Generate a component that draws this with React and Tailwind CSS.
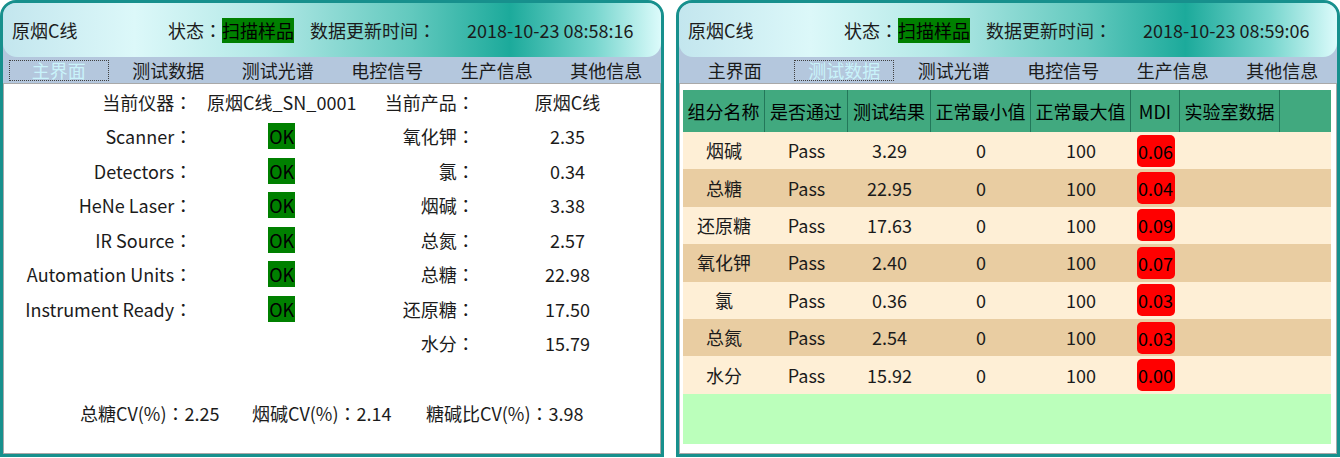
const FONT = { fontFamily: '"Noto Sans CJK SC", "Noto Sans", sans-serif' };

const TABS = ["主界面", "测试数据", "测试光谱", "电控信号", "生产信息", "其他信息"];

// centred full-width colon, as in the TC cut
function C() {
  return <span className="font-['Noto_Sans_CJK_TC',sans-serif]">：</span>;
}

function Header({ time }) {
  return (
    <div className="h-[54px] flex items-center rounded-b-[14px] bg-[linear-gradient(90deg,#c3e6ee_0%,#dcf8f9_20%,#b2e8e6_40%,#62c9be_62%,#1caa9b_77%,#78d6ce_90%,#dcfbfb_100%)] text-[18px] text-[#1b1b1b]">
      <span className="ml-[9px] w-[156px]">原烟C线</span>
      <span className="w-[54px]">状态<C /></span>
      <span className="w-[72px] h-[25px] leading-[25px] bg-[#008000] text-black">扫描样品</span>
      <span className="ml-[16px] w-[157px]">数据更新时间<C /></span>
      <span>{time}</span>
    </div>
  );
}

function Tabs({ active }) {
  return (
    <div className="h-[26px] flex pl-[1px] text-[18px] text-[#1b1b1b]">
      {TABS.map((t, i) => (
        <div key={t} className="w-[110px] flex items-center justify-center">
          {i === active ? (
            <span className="w-[100px] h-[21px] leading-[19px] text-center border border-dotted border-[#404040] text-[#c9f3fa]">
              {t}
            </span>
          ) : (
            t
          )}
        </div>
      ))}
    </div>
  );
}

function Panel({ time, active, children }) {
  return (
    <div className="w-[664px] h-[457px] border-[3px] border-[#17908d] rounded-t-[16px] bg-[#b4c7dd] flex flex-col overflow-hidden">
      <Header time={time} />
      <Tabs active={active} />
      <div className="flex-1 bg-white border border-[#a9a9a9]">{children}</div>
    </div>
  );
}

function Ok() {
  return <span className="inline-block w-[27px] h-[26px] leading-[26px] bg-[#008000] text-black text-center">OK</span>;
}

const LEFT_ROWS = [
  ["当前仪器", "原烟C线_SN_0001", "当前产品", "原烟C线"],
  ["Scanner", "ok", "氧化钾", "2.35"],
  ["Detectors", "ok", "氯", "0.34"],
  ["HeNe Laser", "ok", "烟碱", "3.38"],
  ["IR Source", "ok", "总氮", "2.57"],
  ["Automation Units", "ok", "总糖", "22.98"],
  ["Instrument Ready", "ok", "还原糖", "17.50"],
  ["", "", "水分", "15.79"],
];

function MainView() {
  return (
    <div className="pt-[1px] text-[18px] text-[#1b1b1b]">
      {LEFT_ROWS.map((r, i) => (
        <div key={i} className="h-[34.5px] flex items-center">
          <span className="w-[189px] text-right">{r[0] && <>{r[0]}<C /></>}</span>
          <span className="w-[180px] text-center">{r[1] === "ok" ? <Ok /> : r[1]}</span>
          <span className="w-[104px] text-right">{r[2]}<C /></span>
          <span className="w-[186px] text-center">{r[3]}</span>
        </div>
      ))}
      <div className="mt-[35px] h-[34px] flex items-center pl-[76px]">
        <span className="w-[172px]">总糖CV(%)<C />2.25</span>
        <span className="w-[174px]">烟碱CV(%)<C />2.14</span>
        <span>糖碱比CV(%)<C />3.98</span>
      </div>
    </div>
  );
}

const COLS = [
  ["组分名称", "w-[82px]"],
  ["是否通过", "w-[83px]"],
  ["测试结果", "w-[83px]"],
  ["正常最小值", "w-[100px]"],
  ["正常最大值", "w-[100px]"],
  ["MDI", "w-[49px]"],
  ["实验室数据", "w-[100px]"],
  ["", "w-[51px]"],
];

const DATA = [
  ["烟碱", "3.29", "0.06"],
  ["总糖", "22.95", "0.04"],
  ["还原糖", "17.63", "0.09"],
  ["氧化钾", "2.40", "0.07"],
  ["氯", "0.36", "0.03"],
  ["总氮", "2.54", "0.03"],
  ["水分", "15.92", "0.00"],
];

function TableView() {
  return (
    <div className="pt-[6px] pl-[3px] text-[18px] text-[#1b1b1b]">
      <div className="w-[648px] h-[42px] flex bg-[#41a97f] text-black">
        {COLS.map(([t, w], i) => (
          <div key={i} className={`${w} h-full flex items-center justify-center border-r border-[#23775a] last:border-r-0`}>
            {t}
          </div>
        ))}
      </div>
      {DATA.map((r, i) => (
        <div key={r[0]} className={`w-[648px] h-[37.4px] flex ${i % 2 === 0 ? "bg-[#feefd6]" : "bg-[#e9cda2]"}`}>
          <div className="w-[82px] flex items-center justify-center">{r[0]}</div>
          <div className="w-[83px] flex items-center justify-center">Pass</div>
          <div className="w-[83px] flex items-center justify-center">{r[1]}</div>
          <div className="w-[100px] flex items-center justify-center">0</div>
          <div className="w-[100px] flex items-center justify-center">100</div>
          <div className="w-[49px] flex items-center justify-center">
            <span className="w-[38px] h-[32px] leading-[32px] text-center rounded-[5px] bg-[#ff0000] text-black">{r[2]}</span>
          </div>
        </div>
      ))}
      <div className="w-[648px] h-[50px] bg-[#bbffbb]" />
    </div>
  );
}

export default function App() {
  return (
    <div className="w-[1340px] h-[458px] bg-white flex gap-[12px]" style={FONT}>
      <Panel time="2018-10-23 08:58:16" active={0}>
        <MainView />
      </Panel>
      <Panel time="2018-10-23 08:59:06" active={1}>
        <TableView />
      </Panel>
    </div>
  );
}
